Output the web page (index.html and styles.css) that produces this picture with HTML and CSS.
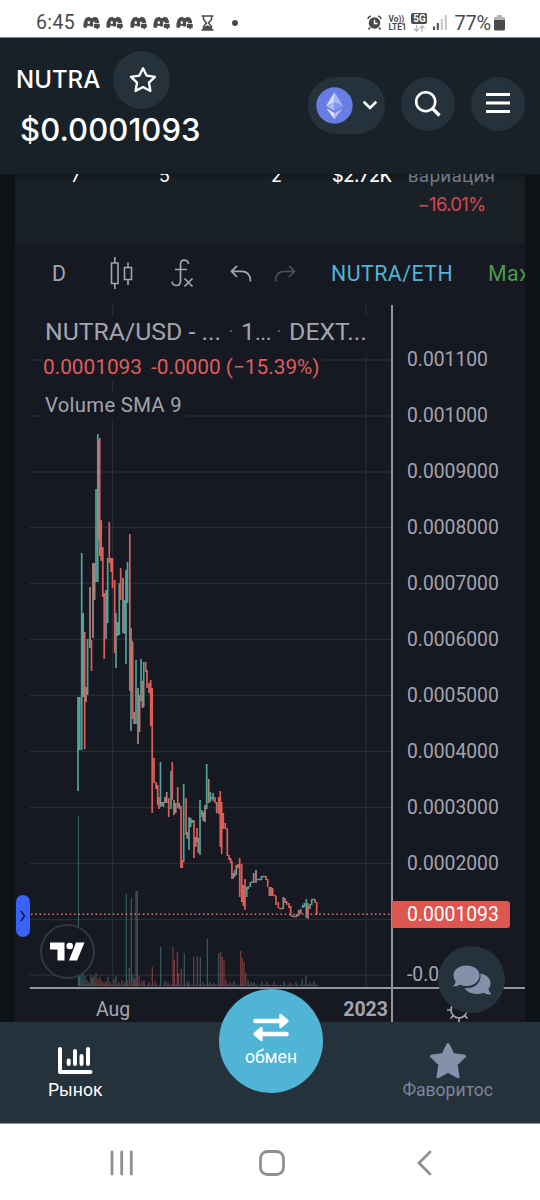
FILE: index.html
```
<!DOCTYPE html>
<html lang="ru">
<head>
    <meta charset="UTF-8">
    <meta name="viewport" content="width=device-width, initial-scale=1.0">
    <title>NUTRA $0.0001093</title>
    <link rel="stylesheet" href="styles.css">
</head>
<body>
    <svg width="0" height="0" class="defs">
        <symbol id="discord" viewBox="0 0 17 14">
            <path d="M.5 11.500C0 7 1.500 3 3.500 1.500L6.500 .8 7.500 2H10L11 .8 14 1.500C15.500 3 16 5 16.200 7H10V10.500H7.500L6.500 9.800H4.500L3.500 12Z" fill="#4b4b4b"/>
            <rect x="10.800" y="7.800" width="6" height="4.200" rx="1" fill="#4b4b4b"/>
            <path d="M12 11.500h3v2z" fill="#4b4b4b"/>
            <ellipse cx="5.800" cy="6.500" rx="1.200" ry="1.500" fill="#fff"/>
            <path d="M9.800 6q1.500-1.500 2.500 .8H9.800z" fill="#fff"/>
        </symbol>
    </svg>

    <div class="status-bar">
        <span class="clock">6:45</span>
        <div class="notifications">
            <svg width="17" height="14"><use href="#discord"/></svg>
            <svg width="17" height="14"><use href="#discord"/></svg>
            <svg width="17" height="14"><use href="#discord"/></svg>
            <svg width="17" height="14"><use href="#discord"/></svg>
            <svg width="17" height="14"><use href="#discord"/></svg>
            <svg class="hourglass" width="13" height="16" viewBox="0 0 13 16" fill="none" stroke="#4b4b4b" stroke-width="1.500"><path d="M.5 1h12M.5 15h12M2.500 1v3.500L5.500 8 2.500 11.500V15M10.500 1v3.500L7.500 8l3 3.500V15"/><path d="M3.500 14v-1.500L6.500 11l3 1.500V14z" fill="#4b4b4b"/></svg>
            <i class="dot"></i>
        </div>
        <div class="system-icons">
            <svg width="15" height="15" viewBox="0 0 15 15"><circle cx="7.500" cy="8" r="5.800" fill="#4b4b4b"/><path d="M.8 4Q1.500 1.500 4 1M14.200 4Q13.500 1.500 11 1M3 12.500l-1.500 2M12 12.500l1.500 2" stroke="#4b4b4b" stroke-width="1.600" fill="none"/><path d="M7.500 4.800V8.500H10.500" stroke="#fff" stroke-width="1.400" fill="none"/></svg>
            <div class="volte"><span>Vo))</span><span>LTE1</span></div>
            <div class="fiveg"><b>5G</b>
                <svg width="12" height="7" viewBox="0 0 12 7" fill="none" stroke="#b5b5b5" stroke-width="1.300"><path d="M3.500 0V6M1 3.800L3.500 6.200 6 3.800M9 7V1M6.500 3.200L9 .8 11.500 3.200"/></svg>
            </div>
            <svg width="14" height="15" viewBox="0 0 14 15"><path d="M0 11.500h2V15H0zM3.800 8h2v7h-2z" fill="#4b4b4b"/><path d="M7.800 4h2v11h-2zM11.800 0h2v15h-2z" fill="#c4c4c4"/></svg>
            <span class="battery-text">77%</span>
            <svg width="11" height="16" viewBox="0 0 11 16"><path d="M3 0h5v2h2q1 0 1 1v3H0V3q0-1 1-1h2z" fill="#b3b3b3"/><path d="M0 5h11v9q0 1.500-1.500 1.500h-8Q0 15.500 0 14z" fill="#4b4b4b"/></svg>
        </div>
    </div>

    <header class="header">
        <div class="token">
            <div class="token-row">
                <h1>NUTRA</h1>
                <button class="round star-btn" aria-label="favorite">
                    <svg width="28" height="28" viewBox="0 0 28 28" fill="none" stroke="#fff" stroke-width="2.300" stroke-linejoin="round"><path d="M14 2.200L17.700 9.700 26 10.900 20 16.700 21.400 25 14 21.100 6.600 25 8 16.700 2 10.900 10.300 9.700Z"/></svg>
                </button>
            </div>
            <div class="price">$0.0001093</div>
        </div>
        <div class="header-actions">
            <button class="chain" aria-label="network">
                <svg width="37" height="37" viewBox="0 0 37 37"><circle cx="18.500" cy="18.500" r="18.200" fill="#677de3"/><path d="M18.500 5L10 19l8.500-3.700z" fill="#d5dcfa"/><path d="M18.500 5L27 19l-8.500-3.700z" fill="#a9b7f2"/><path d="M10 19l8.500-3.700V24z" fill="#a9b7f2"/><path d="M27 19l-8.500-3.700V24z" fill="#8295e8"/><path d="M10.300 21.300L18.500 26v6.300z" fill="#e2e7fc"/><path d="M26.700 21.300L18.500 26v6.300z" fill="#b0bdf3"/></svg>
                <svg width="14" height="9" viewBox="0 0 14 9" fill="none" stroke="#fff" stroke-width="2.600" stroke-linecap="round"><path d="M1.500 1.500L7 7 12.500 1.500"/></svg>
            </button>
            <button class="round" aria-label="search">
                <svg width="28" height="28" viewBox="0 0 28 28" fill="none" stroke="#fff" stroke-width="2.600"><circle cx="11.700" cy="11.700" r="9.500"/><path d="M18.500 18.500L25.500 25.500" stroke-width="3.200"/></svg>
            </button>
            <button class="round" aria-label="menu">
                <svg width="24" height="22" viewBox="0 0 24 22" stroke="#fff" stroke-width="2.800"><path d="M0 1.500H24M0 10H24M0 18.500H24"/></svg>
            </button>
        </div>
    </header>

    <main class="content">
        <section class="stats">
            <span class="stat seven">7</span>
            <span class="stat five">5</span>
            <span class="stat two">2</span>
            <span class="stat volume">$2.72K</span>
            <div class="variation">
                <span>вариация</span>
                <strong>−16.01%</strong>
            </div>
        </section>

        <section class="chart">
            <div class="toolbar">
                <span class="interval">D</span>
                <svg class="candle-icon" width="24" height="32" viewBox="0 0 24 32" fill="none" stroke="#a3a5ae" stroke-width="1.600"><path d="M1.500 6h6.500v20.500h-6.500zM4.800 0v6M4.800 26.500V32M14.500 10.500h7v12h-7zM18 5.500v5M18 22.500V28"/></svg>
                <svg class="fx-icon" width="23" height="28" viewBox="0 0 23 28" fill="none" stroke="#a3a5ae" stroke-width="1.700"><path d="M17.500 5Q17 1.200 13 1.200 9.500 1.200 9.500 5.500V22Q9.500 26.500 5.500 26.500 1.500 26.500 1 22.500M4 10.500H16M13.500 19.500L21.500 27.500M21.500 19.500L13.500 27.500"/></svg>
                <svg class="undo-icon" width="22" height="17" viewBox="0 0 22 17" fill="none" stroke="#a3a5ae" stroke-width="1.800"><path d="M7 .8L1.500 6.300 7 11.800M1.500 6.300H12Q20.500 6.500 20.500 16.500"/></svg>
                <svg class="redo-icon" width="22" height="17" viewBox="0 0 22 17" fill="none" stroke="#4b4e59" stroke-width="1.800"><path d="M15 .8L20.500 6.300 15 11.800M20.500 6.300H10Q1.500 6.500 1.500 16.500"/></svg>
                <span class="pair">NUTRA/ETH</span>
                <span class="max">Max</span>
            </div>

            <div class="chart-grid">
                <div class="plot">
                    <div class="legend">
                        <div class="legend-title"><span>NUTRA/USD - ...</span><i>·</i><span class="res">1<small>...</small></span><i>·</i><span>DEXT...</span></div>
                        <div class="legend-price"><span>0.0001093</span><span>-0.0000 (−15.39%)</span></div>
                        <div class="legend-volume">Volume SMA 9</div>
                    </div>
                    <svg class="candles" width="361" height="682" viewBox="30 305 361 682" fill="none">
                        <path class="grid-line" d="M30 360H392M30 416H392M30 472H392M30 527.500H392M30 583.500H392M30 639.500H392M30 695.500H392M30 751.500H392M30 807.500H392M30 863.500H392M30 919.500H392M30 975H392M112.500 305V987M366 305V987"/>
                        <rect x="42" y="316" width="328" height="40" fill="#161822"/>
                        <rect x="42" y="356" width="280" height="25" fill="#161822"/>
                        <rect x="42" y="393" width="144" height="25" fill="#161822"/>
                        <!-- volume -->
                        <path class="up vol" d="M78.400 816V986M126.300 894V986M131.300 898V986M136 891V986M160.700 947V986M184.300 953V986M200.300 957V986M207.300 939V986M218.700 953V986M79.500 972V986M81 969V986M83 973V986M85 976V986M91 975V986M94 976V986M108 977V986M116 976V986M127 980V986M133 975V986M165 981V986M189 981V986M210 982V986M234 981V986M248 980V986M254 982V986M262 982V986M284 981V986M296 982V986M302 979V986M306 976V986M314 981V986"/>
                        <path class="down vol" d="M137.300 891V986M129.300 968V986M152.300 967V986M173 947V986M174.400 960V986M177.300 952V986M181.300 969V986M193.700 957V986M197.300 956V986M220.700 952V986M222.300 957V986M224 960V986M240.700 951V986M242.300 958V986M244 962V986M245.700 973V986M87 980V986M89 982V986M92.500 978V986M96 973V986M98 979V986M100 977V986M102 981V986M104 983V986M106 981V986M110 982V986M114 979V986M119 982V986M122 980V986M125 982V986M134.500 979V986M139 976V986M142 981V986M144 980V986M149 982V986M155 981V986M168 982V986M178.500 973V986M187 982V986M203 982V986M214 983V986M226 980V986M230 982V986M251 982V986M267 982V986M274 982V986M290 982V986M310 982V986"/>
                        <path class="vol-base" d="M79 985.300H318"/>
                        <!-- daily candles -->
                        <path class="up" d="M78 697V791M79.700 697V750M81.700 553V750M83.200 613V697M87.600 639V695M96 489V582M97.800 434V582M106 590V639M107.700 558V623M116 613V668M117.700 622V636M119.300 583V635M124.700 600V634M126 570V664M127.500 562V603M131 628V731M136 660V724M141 659V701M143.700 662V707M160.500 762V807M163.500 802V807M171 771V809M183.700 784V862M189 817V850M190.700 818V827M192.300 820V823M200 800V855M202 810V817M206.700 764V809M210.300 792V802M211.700 797V799M213 793V801M233 873V879M234.700 870V877M246.700 887V897M248.300 886V889M250.300 882V887M251 882H254M257 879.500H262M261.500 876V880M262 876.500H265M283.300 897V909M292.300 915V917M302.700 905V908M304.300 903V907M306.300 899V918M310 904V909M311.700 899V905M312 899.500H315"/>
                        <path class="down" d="M84.700 632V749M91.500 640V671M99.700 438V556M101.200 520V561M102.800 547V597M104.200 593V659M109.300 522V563M111 558V572M112.500 558V588M114.700 580V653M120.700 568V600M129.800 534V691M132.700 642V719M145.700 662V672M147 670V688M149 683V693M150.700 680V726M152.200 688V813M154 758V783M156 782V789M157.700 785V805M159 797V809M168.700 798V817M172.300 762V800M177.700 787V808M181 806V868M182.300 860V868M186 798V835M194 820V858M197 828V842M215 797V803M218.700 797V814M220.300 791V847M221.700 802V854M223.300 813V829M225.300 823V829M226 829H228M227.300 829V856M229 855V860M230.700 858V863M231.900 861V879M238 864V868M239.700 858V897M241.700 864V902M243.300 885V906M245 879V910M266 876V880M267.700 879V887M269.300 887V896M272.700 888V896M274 895.500H276M276 896V905M278.300 902V908M279 908.500H283M285 898V903M286.700 901V905M289 903V908M290.700 906V916M293 916.500H297M308 903V919M315 899V903M316.700 902V915"/>
                        <path class="mixed" d="M86 687V702M90 587V648M93 563V638M94.600 563V600M98.900 440V540M123 578V633M131.500 640V690M134.200 712V724M138 688V744M139.500 695V732M142.500 681V708M162 802V806M165 797V803M166.700 792V803M174 800V815M175.700 803V813M179.300 803V809M187.300 832V839M195.700 837V847M198.300 838V853M203.300 812V821M205 805V822M208.700 779V803M216.700 802V813M236.300 865V875M253.700 873V883M256 870V883M271 887V896M296.700 914V917M298.700 910V916M300.700 909V914M307 906V914"/>
                        <path class="last-price" d="M31 914.300H392"/>
                    </svg>
                    <div class="tv-logo">
                        <svg width="35" height="19" viewBox="0 0 35 19" fill="#fff"><path d="M0 .5H14.500V18.500H7.500V7.500H0zM26 .5H34.500L27 18.500H19z"/><circle cx="19.700" cy="4" r="3.300"/></svg>
                    </div>
                </div>

                <div class="price-axis">
                    <span>0.001100</span>
                    <span>0.001000</span>
                    <span>0.0009000</span>
                    <span>0.0008000</span>
                    <span>0.0007000</span>
                    <span>0.0006000</span>
                    <span>0.0005000</span>
                    <span>0.0004000</span>
                    <span>0.0003000</span>
                    <span>0.0002000</span>
                    <b class="current">0.0001093</b>
                    <span class="negative">-0.0000</span>
                </div>

                <div class="time-axis"><span>Aug</span><b>2023</b></div>
                <div class="axis-settings">
                    <svg width="28" height="28" viewBox="0 0 28 28" fill="none" stroke="#a3a5ae" stroke-width="1.700"><circle cx="14" cy="14" r="8"/><path d="M14 22v4M14 6V2M22 14h4M6 14H2M19.700 19.700l2.800 2.800M8.300 19.700l-2.800 2.800M8.300 8.300L5.500 5.500M19.700 8.300l2.800-2.800"/></svg>
                </div>
            </div>
            <button class="drawer" aria-label="tools">
                <svg width="6" height="12" viewBox="0 0 6 12" fill="none" stroke="#111b4d" stroke-width="1.600"><path d="M1 1Q3 4 4.500 6 3 8 1 11"/></svg>
            </button>
        </section>
    </main>

    <button class="chat" aria-label="chat">
        <svg width="40" height="32" viewBox="0 0 40 32" fill="#8591aa"><path d="M28 9.500C35 10.500 39 15 38.500 20Q38.300 23 36.300 25.300 37.200 28 39 29.500 39 30.500 38 30.500 34 30.500 31.500 28.700 26 31 20 29.300 14.800 28 12.500 24.300 20 24.800 25 20.500 29.500 16.500 28 9.500Z"/><path d="M14.500 1C22 1 28 5.500 28 11.500S22 22.500 14.500 22.500Q11 22.500 8 21.200 5 23 1.500 23 .3 23 .8 22 2.800 19.800 3.300 17.700 1 15 1 11.500C1 5.500 7 1 14.500 1Z" stroke="#26323b" stroke-width="1"/></svg>
    </button>

    <nav class="bottom-nav">
        <a class="nav-item">
            <svg width="36" height="29" viewBox="0 0 36 29" fill="none" stroke="#fff" stroke-width="4" stroke-linecap="round" stroke-linejoin="round"><path d="M3 3V26H33.500"/><path d="M11.700 14.500V18M18 5V18M24.500 10V18M31 3V18"/></svg>
            <span>Рынок</span>
        </a>
        <a class="exchange">
            <svg width="36" height="29" viewBox="0 0 36 29"><path d="M2.500 8H28M8 21H33.500" stroke="#fff" stroke-width="4.600" stroke-linecap="round"/><path d="M27.500 2V14L34.500 8zM8.500 15V27L1.500 21z" fill="#fff" stroke="#fff" stroke-width="2.400" stroke-linejoin="round"/></svg>
            <span>обмен</span>
        </a>
        <a class="nav-item muted">
            <svg width="38" height="38" viewBox="0 0 38 38" fill="#8591aa" stroke="#8591aa" stroke-width="3" stroke-linejoin="round"><path d="M19 2.500L23.800 12.500 35.500 14.200 27 22.300 29 34.800 19 29.200 9 34.800 11 22.300 2.500 14.200 14.200 12.500Z"/></svg>
            <span>Фаворитос</span>
        </a>
    </nav>

    <div class="system-nav">
        <svg width="24" height="26" viewBox="0 0 24 26" stroke="#909090" stroke-width="2.800" stroke-linecap="round"><path d="M2 2V24M11.700 2V24M21.300 2V24"/></svg>
        <svg class="home" width="26" height="26" viewBox="0 0 26 26" fill="none" stroke="#909090" stroke-width="2.800"><rect x="1.500" y="1.500" width="23" height="23" rx="7"/></svg>
        <svg width="15" height="26" viewBox="0 0 15 26" fill="none" stroke="#909090" stroke-width="2.800" stroke-linecap="round"><path d="M13 2L2 13 13 24"/></svg>
    </div>
</body>
</html>
```

FILE: styles.css
```
* {
    box-sizing: border-box;
}
body {
    margin: 0;
    width: 540px;
    height: 1200px;
    position: relative;
    display: flex;
    flex-direction: column;
    overflow: hidden;
    background: #0d1216;
    font-family: Roboto, sans-serif;
    color: #fff;
}
svg {
    display: block;
    flex-shrink: 0;
}
.defs {
    position: absolute;
}
button {
    border: none;
    padding: 0;
    display: flex;
    align-items: center;
    justify-content: center;
    background: #26323b;
}

/* status bar */
.status-bar {
    height: 38px;
    flex-shrink: 0;
    padding: 8px 35px 0 36px;
    display: flex;
    align-items: center;
    background: #fff;
    color: #4b4b4b;
    border-bottom: 1px solid #84898d;
}
.clock {
    font-size: 19.500px;
    width: 47px;
    letter-spacing: 0.4px;
}
.notifications {
    display: flex;
    align-items: center;
    gap: 6.3px;
}
.hourglass {
    margin-left: 2px;
}
.dot {
    width: 6px;
    height: 6px;
    margin-left: 11px;
    border-radius: 50%;
    background: #4b4b4b;
}
.system-icons {
    display: flex;
    align-items: center;
    margin-left: auto;
}
.volte {
    width: 19px;
    margin: 0 4px 0 6px;
    display: flex;
    flex-direction: column;
    font-size: 8.300px;
    font-weight: 700;
    line-height: 8px;
}
.fiveg {
    display: flex;
    flex-direction: column;
    align-items: center;
    gap: 1px;
    margin-right: 6px;
}
.fiveg b {
    width: 16px;
    height: 11px;
    border-radius: 2px;
    background: #4b4b4b;
    color: #fff;
    font-size: 10px;
    line-height: 11px;
    text-align: center;
}
.battery-text {
    margin: 0 3px 0 7px;
    font-size: 20px;
    letter-spacing: -0.2px;
}

/* header */
.header {
    height: 136px;
    flex-shrink: 0;
    padding: 13px 15px 0 16px;
    display: flex;
    justify-content: space-between;
    background: #182028;
    font-family: Inter, sans-serif;
}
.token-row {
    display: flex;
    align-items: center;
    gap: 14px;
}
h1 {
    margin: -2px 0 0;
    width: 83px;
    font-size: 24px;
    font-weight: 500;
}
.star-btn svg {
    margin-left: 2px;
}
.round {
    width: 54px;
    height: 54px;
    border-radius: 50%;
}
.star-btn {
    width: 57px;
    height: 58px;
}
.price {
    margin: 1px 0 0 4px;
    font-size: 31px;
    font-weight: 500;
    line-height: 40px;
    letter-spacing: 0.1px;
}
.header-actions {
    display: flex;
    align-items: flex-start;
    gap: 16px;
    padding-top: 26px;
}
.chain {
    width: 77px;
    height: 57px;
    border-radius: 29px;
    gap: 10px;
}

/* pair stats, scrolled under the header */
.content {
    flex: 1;
    margin: 0 15px;
    min-height: 0;
}
.stats {
    height: 69px;
    display: flex;
    overflow: hidden;
    background: #192127;
    font-family: Inter, sans-serif;
    font-size: 18px;
    line-height: 24px;
    box-shadow: inset 0 4px 5px -2px #10161b;
}
.stat {
    margin-top: -10px;
}
.seven {
    width: 87px;
    padding-left: 56px;
}
.five {
    width: 112px;
    padding-left: 57px;
}
.two {
    width: 118px;
    padding-left: 57px;
}
.volume {
    width: 76px;
    font-weight: 500;
    letter-spacing: -0.3px;
}
.variation {
    width: 87px;
    margin-top: -10px;
    display: flex;
    flex-direction: column;
    align-items: center;
    color: #747884;
    font-family: Roboto, sans-serif;
    font-size: 19px;
    letter-spacing: 0.2px;
}
.variation strong {
    margin-top: 4px;
    color: #d8474f;
    font: 400 18.500px/24px Inter, sans-serif;
    letter-spacing: -0.7px;
}

/* trading chart */
.chart {
    position: relative;
    height: 779px;
    background: #161822;
    color: #a3a5ae;
}
.toolbar {
    height: 62px;
    display: flex;
    align-items: center;
    overflow: hidden;
    padding: 0 0 2px 37px;
    font-size: 21.300px;
}
.interval {
    width: 58px;
    flex-shrink: 0;
}
.candle-icon {
    margin-right: 37px;
}
.fx-icon {
    margin-right: 36px;
}
.undo-icon {
    margin-right: 22px;
}
.redo-icon {
    margin-right: 35px;
}
.pair {
    width: 157px;
    flex-shrink: 0;
    color: #51b4d3;
    letter-spacing: 0.5px;
}
.max {
    color: #4b9b4c;
    letter-spacing: 0.5px;
}
.chart-grid {
    display: grid;
    grid-template-columns: 361px 134px;
    grid-template-rows: 682px 35px;
    padding-left: 15px;
}
.plot {
    position: relative;
}
.legend {
    position: absolute;
    top: 9px;
    left: 13px;
    white-space: nowrap;
}
.legend-title {
    display: flex;
    padding-left: 2px;
    font-size: 24.800px;
    line-height: 36px;
}
.legend-title i {
    width: 20px;
    text-align: center;
    font-size: 18px;
    font-style: normal;
    color: #6b6e79;
}
.res {
    width: 28px;
}
.res small {
    font-size: 22px;
    letter-spacing: -0.5px;
}
.legend-price {
    display: flex;
    gap: 9px;
    font-size: 20.800px;
    line-height: 33px;
    color: #dd5e5c;
}
.legend-volume {
    margin-top: 4px;
    padding-left: 2px;
    font-size: 20.300px;
    line-height: 34px;
    letter-spacing: 0.3px;
}
.grid-line {
    stroke: #282b34;
    stroke-width: 1.300;
}
.up {
    stroke: #52a49a;
    stroke-width: 1.700;
}
.down {
    stroke: #dd5e57;
    stroke-width: 1.700;
}
.mixed {
    stroke: #a1837c;
    stroke-width: 1.800;
}
.vol {
    stroke-width: 1.200;
    opacity: 0.5;
}
.vol-base {
    stroke: #53545b;
    stroke-dasharray: 3 1;
}
.last-price {
    stroke: #d87373;
    stroke-width: 1.600;
    stroke-dasharray: 1.600 2.700;
}
.tv-logo {
    position: absolute;
    left: 10px;
    top: 619px;
    width: 55px;
    height: 55px;
    border: 2px solid #33353f;
    border-radius: 50%;
    background: #161822;
    display: flex;
    align-items: center;
    justify-content: center;
}
.price-axis {
    display: flex;
    flex-direction: column;
    padding-top: 27px;
    border-left: 2px solid #94969f;
    font-size: 19.300px;
}
.price-axis span {
    height: 56px;
    flex-shrink: 0;
    padding-left: 14px;
    line-height: 56px;
}
.price-axis .current {
    width: 118px;
    height: 27px;
    flex-shrink: 0;
    margin: 9px 0 19px -1px;
    padding-left: 15px;
    border-radius: 0 3px 3px 0;
    background: #db5750;
    color: #fff;
    font-weight: 400;
    line-height: 27px;
}
.price-axis .negative {
    height: 40px;
}
.time-axis {
    display: flex;
    justify-content: space-between;
    padding: 0 3px 0 66px;
    border-top: 2px solid #94969f;
    font-size: 19.500px;
    line-height: 42px;
}
.axis-settings {
    display: flex;
    padding: 7px 0 0 52px;
    border-top: 2px solid #94969f;
    border-left: 2px solid #94969f;
}
.drawer {
    position: absolute;
    left: 1px;
    top: 652px;
    width: 14px;
    height: 42px;
    border-radius: 7px;
    background: #3864fa;
}
.chat {
    position: absolute;
    left: 438px;
    top: 946px;
    width: 67px;
    height: 67px;
    border-radius: 50%;
}

/* bottom navigation */
.bottom-nav {
    height: 101px;
    flex-shrink: 0;
    position: relative;
    display: flex;
    justify-content: space-between;
    padding: 0 47px 0 48px;
    background: #26323b;
    font-size: 17.600px;
}
.nav-item {
    display: flex;
    flex-direction: column;
    align-items: center;
    justify-content: flex-end;
    gap: 5px;
    padding-bottom: 23px;
}
.muted {
    gap: 0;
    color: #7b869b;
}
.exchange {
    position: absolute;
    left: 219px;
    top: -33px;
    width: 104px;
    height: 104px;
    border-radius: 50%;
    background: #50b4d5;
    display: flex;
    flex-direction: column;
    align-items: center;
    padding-top: 24px;
    gap: 5px;
}
.system-nav {
    height: 77px;
    flex-shrink: 0;
    display: flex;
    justify-content: space-between;
    align-items: center;
    padding: 2px 108px 0 110px;
    background: #fff;
    border-top: 1px solid #89949b;
}
.home {
    margin-right: 7px;
}
```
